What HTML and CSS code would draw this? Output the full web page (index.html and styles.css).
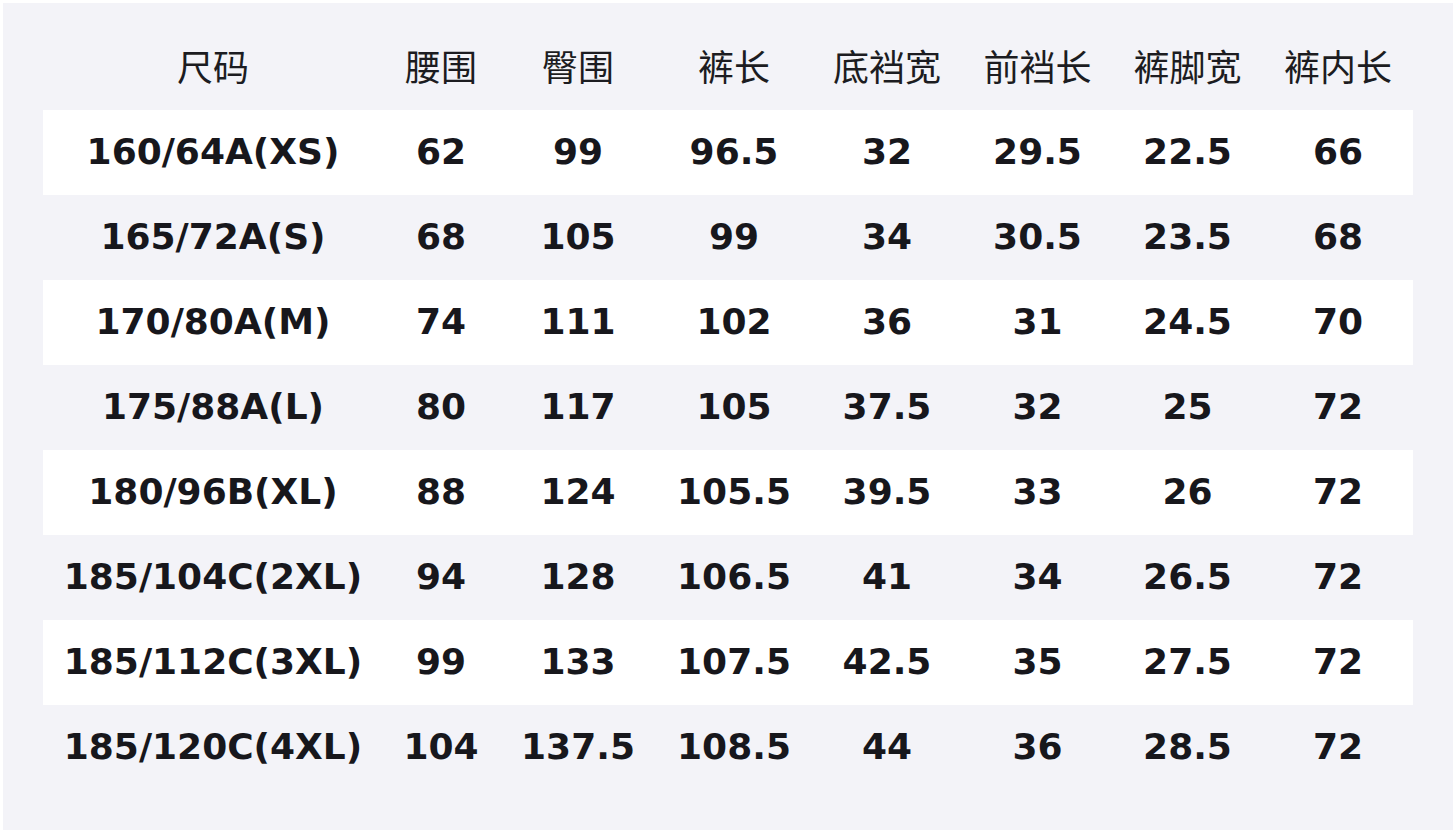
FILE: index.html
```html
<!DOCTYPE html>
<html lang="zh">
<head>
<meta charset="utf-8">
<title>尺码表</title>
<link rel="stylesheet" href="styles.css">
</head>
<body>
<div class="panel">
  <div class="table">
    <div class="row head">
      <div>尺码</div><div>腰围</div><div>臀围</div><div>裤长</div><div>底裆宽</div><div>前裆长</div><div>裤脚宽</div><div>裤内长</div>
    </div>
    <div class="row odd"><div>160/64A(XS)</div><div>62</div><div>99</div><div>96.5</div><div>32</div><div>29.5</div><div>22.5</div><div>66</div></div>
    <div class="row"><div>165/72A(S)</div><div>68</div><div>105</div><div>99</div><div>34</div><div>30.5</div><div>23.5</div><div>68</div></div>
    <div class="row odd"><div>170/80A(M)</div><div>74</div><div>111</div><div>102</div><div>36</div><div>31</div><div>24.5</div><div>70</div></div>
    <div class="row"><div>175/88A(L)</div><div>80</div><div>117</div><div>105</div><div>37.5</div><div>32</div><div>25</div><div>72</div></div>
    <div class="row odd"><div>180/96B(XL)</div><div>88</div><div>124</div><div>105.5</div><div>39.5</div><div>33</div><div>26</div><div>72</div></div>
    <div class="row"><div>185/104C(2XL)</div><div>94</div><div>128</div><div>106.5</div><div>41</div><div>34</div><div>26.5</div><div>72</div></div>
    <div class="row odd"><div>185/112C(3XL)</div><div>99</div><div>133</div><div>107.5</div><div>42.5</div><div>35</div><div>27.5</div><div>72</div></div>
    <div class="row"><div>185/120C(4XL)</div><div>104</div><div>137.5</div><div>108.5</div><div>44</div><div>36</div><div>28.5</div><div>72</div></div>
  </div>
</div>
</body>
</html>
```
FILE: styles.css
```css
html, body {
  margin: 0;
  padding: 0;
  background: #ffffff;
}
body {
  width: 1456px;
  height: 833px;
  padding: 3px;
  box-sizing: border-box;
}
.panel {
  background: #f3f3f8;
  height: 827px;
  box-sizing: border-box;
  padding: 27px 40px 0 40px;
}
.table {
  display: flex;
  flex-direction: column;
  width: 1370px;
}
.row {
  display: grid;
  grid-template-columns: 340px 116px 158px 154px 152px 149px 151px 150px;
  height: 85px;
  box-sizing: border-box;
  padding-bottom: 2px;
  align-items: center;
  justify-items: center;
  color: #17171c;
  font-family: "DejaVu Sans", "Noto Sans CJK SC", sans-serif;
  font-weight: bold;
  font-size: 36px;
  white-space: nowrap;
}
.row.odd {
  background: #ffffff;
}
.row.head {
  height: 80px;
  padding-bottom: 10px;
  font-family: "Noto Sans CJK SC", sans-serif;
  font-weight: normal;
  font-size: 36px;
  color: #1c1c21;
}
```
